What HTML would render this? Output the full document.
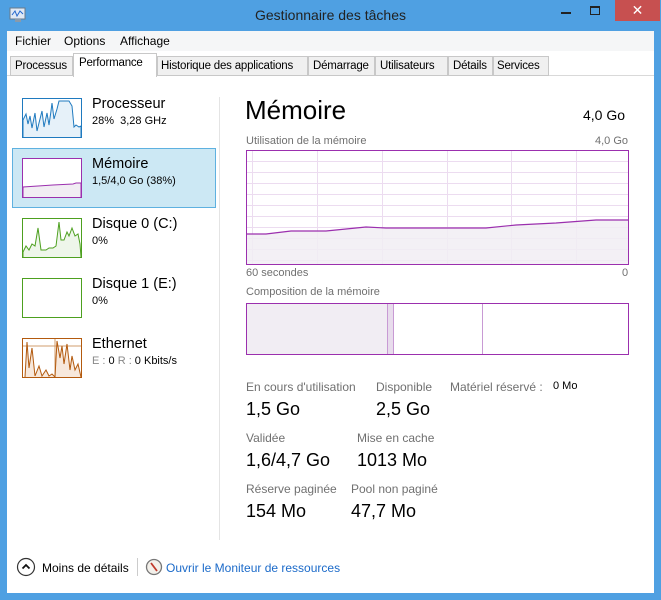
<!DOCTYPE html>
<html><head><meta charset="utf-8"><style>
*{margin:0;padding:0;box-sizing:border-box}
body{width:661px;height:600px;background:#4fa0e2;font-family:"Liberation Sans",sans-serif;position:relative;overflow:hidden;color:#000}
.a{position:absolute;white-space:nowrap}
.g{color:#707070;font-size:11px}
.big{font-size:18px}
</style></head><body>
<div class="a" style="left:7px;top:31px;width:647px;height:562px;background:#fff"></div>
<div class="a" style="left:7px;top:31px;width:647px;height:20px;background:#f5f6f7"></div>
<div class="a" style="left:7px;top:51px;width:647px;height:25px;background:#fff;border-bottom:1px solid #d9d9d9"></div>
<div class="a" style="left:0;top:7px;width:661px;text-align:center;font-size:14px;color:#222">Gestionnaire des tâches</div>
<svg class="a" style="left:9px;top:7px" width="18" height="16"><rect x="1" y="1" width="15" height="11" fill="#dfe9f5" stroke="#6a7a8a"/><path d="M3 8l3-4 2 5 3-5 3 3" fill="none" stroke="#2266cc"/><rect x="6" y="12" width="6" height="3" fill="#8a9aaa"/></svg>
<div class="a" style="left:561px;top:12px;width:10px;height:2px;background:#222"></div>
<div class="a" style="left:590px;top:6px;width:10px;height:9px;border:1px solid #222;border-top-width:2px"></div>
<div class="a" style="left:615px;top:0;width:45px;height:21px;background:#c75050;color:#fff;text-align:center;font-size:14px;line-height:21px">✕</div>
<div class="a" style="left:15px;top:34px;font-size:12px">Fichier</div>
<div class="a" style="left:64px;top:34px;font-size:12px">Options</div>
<div class="a" style="left:120px;top:34px;font-size:12px">Affichage</div>
<div class="a" style="left:10px;top:56px;height:20px;width:576px;font-size:11.5px;letter-spacing:-0.2px">
<span class="a" style="left:0;width:63px;height:20px;border:1px solid #c8c8c8;background:#f0f0f0;padding:3px 0 0 4px">Processus</span>
<span class="a" style="left:147px;width:151px;height:20px;border:1px solid #c8c8c8;background:#f0f0f0;padding:3px 0 0 3px">Historique des applications</span>
<span class="a" style="left:298px;width:67px;height:20px;border:1px solid #c8c8c8;background:#f0f0f0;padding:3px 0 0 4px">Démarrage</span>
<span class="a" style="left:365px;width:73px;height:20px;border:1px solid #c8c8c8;background:#f0f0f0;padding:3px 0 0 4px">Utilisateurs</span>
<span class="a" style="left:438px;width:45px;height:20px;border:1px solid #c8c8c8;background:#f0f0f0;padding:3px 0 0 4px">Détails</span>
<span class="a" style="left:483px;width:56px;height:20px;border:1px solid #c8c8c8;background:#f0f0f0;padding:3px 0 0 3px">Services</span>
<span class="a" style="left:63px;top:-3px;width:84px;height:24px;border:1px solid #c8c8c8;border-bottom:none;background:#fff;padding:3px 0 0 5px">Performance</span>
</div>
<div class="a" style="left:219px;top:97px;width:1px;height:443px;background:#e4e4e4"></div>
<div class="a" style="left:12px;top:148px;width:204px;height:60px;background:#cce8f4;border:1px solid #5eb1e0"></div>
<svg class="a" style="left:22px;top:98px" width="60" height="40"><rect x=".5" y=".5" width="59" height="39" fill="#fff" stroke="#1f7abf"/><polyline points="1,39 1,22 4,16 6,26 8,18 10,30 13,15 15,33 18,21 20,13 22,29 25,15 27,27 29,13 30,5 32,21 35,11 37,3 47,3 50,8 52,29 54,27 57,29 59,28 59,39" fill="#e6f1f9" stroke="#1f7abf"/></svg>
<svg class="a" style="left:22px;top:158px" width="60" height="40"><rect x=".5" y=".5" width="59" height="39" fill="#fff" stroke="#9b2fae"/><polyline points="1,39 1,29 16,28 31,27 51,26 54,25 59,25 59,39" fill="#f1edf3" stroke="#9b2fae"/></svg>
<svg class="a" style="left:22px;top:218px" width="60" height="40"><rect x=".5" y=".5" width="59" height="39" fill="#fff" stroke="#4da01f"/><polyline points="1,39 1,34 4,28 7,32 10,26 13,28 16,10 19,32 24,32 27,30 31,30 34,28 37,4 39,22 42,22 45,14 47,18 50,10 53,18 56,16 58,26 59,39" fill="#eef6ea" stroke="#4da01f"/></svg>
<svg class="a" style="left:22px;top:278px" width="60" height="40"><rect x=".5" y=".5" width="59" height="39" fill="#fff" stroke="#4da01f"/></svg>
<svg class="a" style="left:22px;top:338px" width="60" height="40"><rect x=".5" y=".5" width="59" height="39" fill="#fff" stroke="#b35a0e"/><polyline points="3,39 5,4 7,30 10,10 13,38 17,28 20,38 24,32 27,38 30,36 33,39 35,3 38,20 40,8 42,26 45,6 48,32 50,18 53,32 56,26 59,39" fill="#f7e8dc" stroke="#b35a0e"/><path d="M1 8h58M33 1v38" stroke="#b35a0e" stroke-opacity=".6"/></svg>
<div class="a" style="left:92px;top:96px;font-size:14.5px">Processeur</div>
<div class="a" style="left:92px;top:115px;font-size:11px">28%&nbsp; 3,28 GHz</div>
<div class="a" style="left:92px;top:156px;font-size:14.5px">Mémoire</div>
<div class="a" style="left:92px;top:175px;font-size:11px">1,5/4,0 Go (38%)</div>
<div class="a" style="left:92px;top:216px;font-size:14.5px">Disque 0 (C:)</div>
<div class="a" style="left:92px;top:235px;font-size:11px">0%</div>
<div class="a" style="left:92px;top:276px;font-size:14.5px">Disque 1 (E:)</div>
<div class="a" style="left:92px;top:295px;font-size:11px">0%</div>
<div class="a" style="left:92px;top:336px;font-size:14.5px">Ethernet</div>
<div class="a" style="left:92px;top:355px;font-size:11px"><span style="color:#888">E :</span> 0 <span style="color:#888">R :</span> 0 Kbits/s</div>
<div class="a" style="left:245px;top:95px;font-size:26px">Mémoire</div>
<div class="a" style="left:583px;top:107px;font-size:14px">4,0 Go</div>
<div class="a g" style="left:246px;top:135px">Utilisation de la mémoire</div>
<div class="a g" style="left:595px;top:135px">4,0 Go</div>
<svg class="a" style="left:246px;top:150px" width="383" height="115">
<g stroke="#ecdcf0" stroke-width="1">
<path d="M0 11.5h383M0 22.5h383M0 33.5h383M0 44.5h383M0 55.5h383M0 66.5h383M0 77.5h383M0 88.5h383M0 99.5h383M0 110.5h383"/>
<path d="M6.5 0v115M71.5 0v115M136.5 0v115M201.5 0v115M265.5 0v115M330.5 0v115"/>
</g>
<path d="M0 84L20 84 45 81 80 81 120 77 140 78 240 78 270 75 310 73 350 70 383 70V115H0z" fill="#f1edf3" fill-opacity=".85" stroke="#9b2fae" stroke-width="1.2"/>
<rect x=".5" y=".5" width="382" height="114" fill="none" stroke="#9b2fae"/>
</svg>
<div class="a g" style="left:246px;top:267px">60 secondes</div>
<div class="a g" style="left:622px;top:267px">0</div>
<div class="a g" style="left:246px;top:286px">Composition de la mémoire</div>
<svg class="a" style="left:246px;top:303px" width="383" height="52">
<rect x="0" y="0" width="141" height="52" fill="#f1edf3"/>
<rect x="141" y="0" width="6" height="52" fill="#e8dcec"/>
<path d="M141.5 0v52M147.5 0v52M236.5 0v52" stroke="#c89ad4"/>
<rect x=".5" y=".5" width="382" height="51" fill="none" stroke="#9b2fae"/>
</svg>
<div class="a g" style="left:246px;top:380px;font-size:12px">En cours d'utilisation</div>
<div class="a g" style="left:376px;top:380px;font-size:12px">Disponible</div>
<div class="a g" style="left:450px;top:380px;font-size:12px">Matériel réservé :</div>
<div class="a" style="left:553px;top:380px;font-size:11px">0 Mo</div>
<div class="a big" style="left:246px;top:399px">1,5 Go</div>
<div class="a big" style="left:376px;top:399px">2,5 Go</div>
<div class="a g" style="left:246px;top:431px;font-size:12px">Validée</div>
<div class="a g" style="left:357px;top:431px;font-size:12px">Mise en cache</div>
<div class="a big" style="left:246px;top:450px">1,6/4,7 Go</div>
<div class="a big" style="left:357px;top:450px">1013 Mo</div>
<div class="a g" style="left:246px;top:482px;font-size:12px">Réserve paginée</div>
<div class="a g" style="left:351px;top:482px;font-size:12px">Pool non paginé</div>
<div class="a big" style="left:246px;top:501px">154 Mo</div>
<div class="a big" style="left:351px;top:501px">47,7 Mo</div>
<svg class="a" style="left:16px;top:557px" width="20" height="20"><circle cx="10" cy="10" r="8.5" fill="#fff" stroke="#333" stroke-width="1.2"/><path d="M6.5 11.5L10 8l3.5 3.5" fill="none" stroke="#111" stroke-width="1.8"/></svg>
<div class="a" style="left:42px;top:561px;font-size:12px">Moins de détails</div>
<div class="a" style="left:137px;top:558px;width:1px;height:18px;background:#ccc"></div>
<svg class="a" style="left:145px;top:558px" width="18" height="18"><circle cx="9" cy="9" r="7.5" fill="#f3f0ea" stroke="#777" stroke-width="1.3"/><path d="M6 5l6 8" stroke="#c0392b" stroke-width="1.8"/></svg>
<div class="a" style="left:166px;top:561px;font-size:12px;color:#1b6ac9">Ouvrir le Moniteur de ressources</div>
</body></html>
